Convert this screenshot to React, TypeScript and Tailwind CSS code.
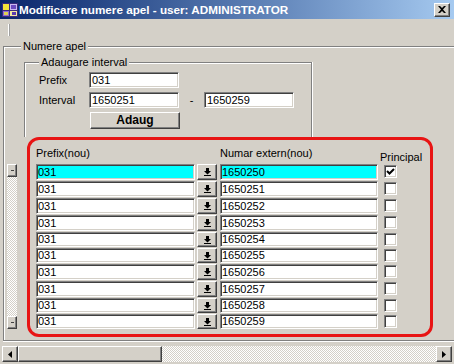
import React from "react";

const sunkenBorder =
  "border border-t-[#808080] border-l-[#808080] border-r-white border-b-white shadow-[inset_1px_1px_0_#404040,inset_-1px_-1px_0_#d4d0c8]";
const sunken = `bg-white ${sunkenBorder}`;
const raised =
  "bg-[#d4d0c8] border border-t-white border-l-white border-r-[#404040] border-b-[#404040] shadow-[inset_-1px_-1px_0_#808080]";
const dither =
  "bg-[repeating-conic-gradient(#ffffff_0%_25%,#d4d0c8_0%_50%)] bg-[length:2px_2px]";

const rows = [
  { n: "1650250", h: "h-[17px]", sel: true, chk: true },
  { n: "1650251", h: "h-[17px]" },
  { n: "1650252", h: "h-[17px]" },
  { n: "1650253", h: "h-[17px]" },
  { n: "1650254", h: "h-[16px]" },
  { n: "1650255", h: "h-[16px]" },
  { n: "1650256", h: "h-[17px]" },
  { n: "1650257", h: "h-[17px]" },
  { n: "1650258", h: "h-[16px]" },
  { n: "1650259", h: "h-[16px]" },
];

function DownIcon() {
  return (
    <svg width="7" height="8" viewBox="0 0 7 8">
      <path d="M2 0h3v3h2L3.5 6.5 0 3h2z" fill="#000" />
      <rect x="0" y="7" width="7" height="1" fill="#000" />
    </svg>
  );
}

function AppIcon() {
  return (
    <svg width="16" height="16" viewBox="0 0 16 16">
      <rect x="0" y="1" width="16" height="14" fill="#3a2a7a" />
      <rect x="1" y="2" width="6" height="6" fill="#f2e23a" />
      <rect x="8" y="2" width="7" height="6" fill="#c8b8f0" />
      <rect x="9" y="3" width="5" height="4" fill="#6a4ac0" />
      <rect x="1" y="9" width="6" height="5" fill="#8a6ad8" />
      <rect x="8" y="9" width="7" height="5" fill="#f0e8a0" />
      <rect x="2" y="10" width="4" height="3" fill="#e0d050" />
      <rect x="10" y="10" width="4" height="3" fill="#5a3ab0" />
    </svg>
  );
}

export default function App() {
  return (
    <div className="w-[454px] h-[364px] bg-[#d4d0c8] flex flex-col overflow-hidden text-[11px] leading-[13px] text-black font-['Liberation_Sans',Arial,sans-serif]">
      {/* Title bar */}
      <div className="h-[19px] shrink-0 flex items-center pl-[2px] pr-[4px] bg-linear-to-r from-[#0a246a] to-[#a6caf0]">
        <AppIcon />
        <span className="ml-[1px] text-white font-bold text-[11.7px] leading-[14px] whitespace-nowrap">
          Modificare numere apel - user: ADMINISTRATOR
        </span>
        <div className={`ml-auto w-[16px] h-[14px] flex items-center justify-center ${raised}`}>
          <svg width="8" height="7" viewBox="0 0 8 7">
            <path d="M0 0h2l2 2 2-2h2L5 3.5 8 7H6L4 5 2 7H0l3-3.5z" fill="#000" />
          </svg>
        </div>
      </div>

      {/* Body */}
      <div className="flex-1 flex flex-col">
        <div className="h-[27px] shrink-0 pl-[8px] pt-[5px]">
          <div className="w-[2px] h-[12px] border-l border-l-white border-r border-r-[#a0a0a0]" />
        </div>

        {/* Numere apel group */}
        <div className="relative ml-[3px] h-[295px] border-t border-l border-b border-[#808080] shadow-[inset_1px_1px_0_#ffffff,0_1px_0_#ffffff]">
          <span className="absolute left-[17px] top-[-7px] px-[2px] bg-[#d4d0c8]">Numere apel</span>

          <div className="flex flex-col pt-[15px]">
            {/* Adaugare interval */}
            <div className="relative ml-[20px] w-[288px] h-[75px] border-t border-l border-r border-[#808080] shadow-[inset_1px_1px_0_#ffffff,1px_0_0_#ffffff]">
              <span className="absolute left-[14px] top-[-7px] px-[2px] bg-[#d4d0c8]">Adaugare interval</span>
              <div className="flex flex-col gap-[4px] pt-[9px] pl-[14px]">
                <div className="flex items-center h-[16px]">
                  <span className="w-[50px]">Prefix</span>
                  <div className={`w-[90px] h-[16px] pl-[2px] flex items-center ${sunken}`}>031</div>
                </div>
                <div className="flex items-center h-[16px]">
                  <span className="w-[50px]">Interval</span>
                  <div className={`w-[90px] h-[16px] pl-[2px] flex items-center ${sunken}`}>1650251</div>
                  <span className="w-[25px] text-center">-</span>
                  <div className={`w-[90px] h-[16px] pl-[2px] flex items-center ${sunken}`}>1650259</div>
                </div>
                <div className="flex items-center h-[17px] pl-[51px]">
                  <div className={`w-[90px] h-[17px] flex items-center justify-center font-bold text-[12px] ${raised}`}>
                    Adaug
                  </div>
                </div>
              </div>
            </div>

            {/* grid area */}
            <div className="flex">
              <div className="ml-[3px] mt-[27px] w-[10px] h-[165px] flex flex-col">
                <div className={`w-[10px] h-[13px] flex items-center justify-center ${raised}`}>
                  <div className="w-[3px] h-[1px] bg-[#404040]" />
                </div>
                <div className={`flex-1 ${dither}`} />
                <div className={`w-[10px] h-[13px] flex items-center justify-center ${raised}`}>
                  <div className="w-[3px] h-[1px] bg-[#404040]" />
                </div>
              </div>

              <div className="ml-[10px] w-[406px] h-[200px] border-[3px] border-[#e81414] rounded-[12px] pl-[6px] flex flex-col">
                <div className="h-[24px] flex">
                  <span className="w-[184px] pt-[7px]">Prefix(nou)</span>
                  <span className="w-[160px] pt-[7px]">Numar extern(nou)</span>
                  <span className="pt-[11px]">Principal</span>
                </div>
                {rows.map((r, i) => (
                  <div key={i} className={`${r.h} pb-[1px] flex`}>
                    <div
                      className={`w-[159px] h-full pl-[1px] flex items-center ${sunkenBorder} ${r.sel ? "bg-[#00ffff]" : "bg-white"}`}
                    >
                      031
                    </div>
                    <div className={`ml-[2px] w-[20px] h-full flex items-center justify-center ${raised}`}>
                      <DownIcon />
                    </div>
                    <div
                      className={`ml-[3px] w-[158px] h-full pl-[1px] flex items-center ${sunkenBorder} ${r.sel ? "bg-[#00ffff]" : "bg-white"}`}
                    >
                      {r.n}
                    </div>
                    <div className={`ml-[6px] mt-[1px] w-[13px] h-[13px] flex items-center justify-center ${sunken}`}>
                      {r.chk ? (
                        <svg width="9" height="9" viewBox="0 0 9 9">
                          <path d="M1 4l2.5 2.5L8 2" stroke="#000" strokeWidth="2" fill="none" />
                        </svg>
                      ) : null}
                    </div>
                  </div>
                ))}
              </div>
            </div>
          </div>
        </div>

        {/* horizontal scrollbar */}
        <div className="mt-[5px] ml-[2px] w-[450px] h-[16px] flex">
          <div className={`w-[16px] h-[16px] flex items-center justify-center ${raised}`}>
            <svg width="4" height="7" viewBox="0 0 4 7">
              <path d="M4 0v7L0 3.5z" fill="#000" />
            </svg>
          </div>
          <div className={`w-[144px] h-[16px] ${raised}`} />
          <div className={`flex-1 ${dither}`} />
          <div className={`w-[16px] h-[16px] flex items-center justify-center ${raised}`}>
            <svg width="4" height="7" viewBox="0 0 4 7">
              <path d="M0 0v7L4 3.5z" fill="#000" />
            </svg>
          </div>
        </div>
      </div>
    </div>
  );
}
